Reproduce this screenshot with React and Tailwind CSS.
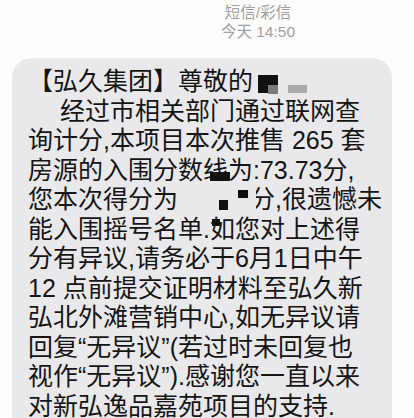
import React from 'react'

const LINES = [
  '询计分,本项目本次推售 265 套',
  '房源的入围分数线为:73.73分,',
]

const REST = [
  '能入围摇号名单.如您对上述得',
  '分有异议,请务必于6月1日中午',
  '12 点前提交证明材料至弘久新',
  '弘北外滩营销中心,如无异议请',
  '回复“无异议”(若过时未回复也',
  '视作“无异议”).感谢您一直以来',
  '对新弘逸品嘉苑项目的支持.',
]

export default function App() {
  return (
    <div className="w-[414px] h-[418px] overflow-hidden bg-[#fdfdfd] font-['Liberation_Sans','Noto_Sans_CJK_SC',sans-serif]">
      <div className="pl-[102px] pt-[3px] text-center text-[15.5px] leading-[19px] text-[#a0a0a0]">
        <div>短信/彩信</div>
        <div>今天 14:50</div>
      </div>

      <div className="mt-[17px] ml-[12px] mr-[22px] rounded-[20px] bg-[#e9e9eb] pl-[16px] pt-[9px] pb-6 text-[25px] leading-[29.5px] text-[#151515] whitespace-nowrap">
        <div className="relative">
          【弘久集团】尊敬的
          <span className="absolute left-[230px] top-[8px] h-[18px] w-[20px] bg-[#111]" />
          <span className="absolute left-[240px] top-[18px] h-[9px] w-[10px] bg-[#7a7a7a]" />
          <span className="absolute left-[260px] top-[18px] h-[8px] w-[19px] bg-[#ababab]" />
        </div>
        <div className="pl-[32px]">经过市相关部门通过联网查</div>
        <div>{LINES[0]}</div>
        <div className="relative">
          {LINES[1]}
          <span className="absolute left-[182px] top-[16px] h-[9px] w-[20px] bg-[#111]" />
        </div>
        <div className="relative flex">
          <span>您本次得分为</span>
          <span className="w-[72px]" />
          <span>分,很遗憾未</span>
          <span className="absolute left-[191px] top-[15px] h-[10px] w-[9px] bg-[#111]" />
          <span className="absolute left-[210px] top-[5px] h-[8px] w-[10px] bg-[#111]" />
          <span className="absolute left-[222px] top-[2px] h-[24px] w-[6px] bg-[#e9e9eb]" />
        </div>
        {REST.map((t, i) => (
          <div key={i} className="relative">
            {t}
            {i === 0 && <span className="absolute left-[184px] top-[4px] h-[7px] w-[8px] bg-[#111]" />}
          </div>
        ))}
      </div>
    </div>
  )
}
